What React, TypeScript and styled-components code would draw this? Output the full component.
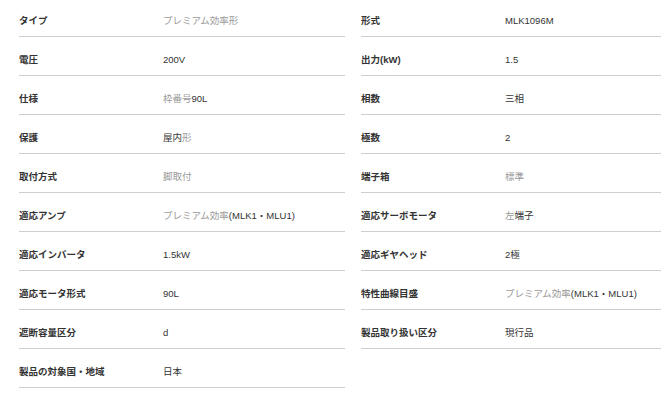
import React from "react";
import styled, { createGlobalStyle } from "styled-components";

const GlobalStyle = createGlobalStyle`
  html, body {
    margin: 0;
    padding: 0;
    background: #fff;
    overflow: hidden;
  }
  body {
    font-family: "Liberation Sans", "Noto Sans CJK JP", sans-serif;
  }
`;

const Page = styled.div`
  display: grid;
  grid-template-columns: 326px 1fr;
  column-gap: 16px;
  align-items: start;
  padding-left: 19px;
  margin-top: -2px;
  width: 642px;
`;

const Column = styled.dl`
  display: flex;
  flex-direction: column;
  margin: 0;
  min-width: 0;
`;

const Row = styled.div`
  display: grid;
  grid-template-columns: 144px 1fr;
  align-items: center;
  padding: 16px 0 8px;
  border-bottom: 1px solid #cfcfcf;
  font-size: 9.5px;
  line-height: 14px;
`;

const Label = styled.dt`
  margin: 0;
  font-weight: bold;
  color: #333;
  white-space: nowrap;
`;

const Value = styled.dd`
  margin: 0;
  color: #333;
  white-space: nowrap;
`;

const Muted = styled.span`
  color: #9a9a9a;
`;

type Part = string | { m: string };
type Spec = { label: string; value: Part[] };

const left: Spec[] = [
  { label: "タイプ", value: [{ m: "プレミアム効率形" }] },
  { label: "電圧", value: ["200V"] },
  { label: "仕様", value: [{ m: "枠番号" }, "90L"] },
  { label: "保護", value: ["屋内", { m: "形" }] },
  { label: "取付方式", value: [{ m: "脚取付" }] },
  { label: "適応アンプ", value: [{ m: "プレミアム効率" }, "(MLK1・MLU1)"] },
  { label: "適応インバータ", value: ["1.5kW"] },
  { label: "適応モータ形式", value: ["90L"] },
  { label: "遮断容量区分", value: ["d"] },
  { label: "製品の対象国・地域", value: ["日本"] },
];

const right: Spec[] = [
  { label: "形式", value: ["MLK1096M"] },
  { label: "出力(kW)", value: ["1.5"] },
  { label: "相数", value: ["三相"] },
  { label: "極数", value: ["2"] },
  { label: "端子箱", value: [{ m: "標準" }] },
  { label: "適応サーボモータ", value: [{ m: "左" }, "端子"] },
  { label: "適応ギヤヘッド", value: ["2極"] },
  { label: "特性曲線目盛", value: [{ m: "プレミアム効率" }, "(MLK1・MLU1)"] },
  { label: "製品取り扱い区分", value: ["現行品"] },
];

const SpecList: React.FC<{ items: Spec[] }> = ({ items }) => (
  <Column>
    {items.map((item) => (
      <Row key={item.label}>
        <Label>{item.label}</Label>
        <Value>
          {item.value.map((p, i) =>
            typeof p === "string" ? (
              <React.Fragment key={i}>{p}</React.Fragment>
            ) : (
              <Muted key={i}>{p.m}</Muted>
            )
          )}
        </Value>
      </Row>
    ))}
  </Column>
);

export default function App() {
  return (
    <>
      <GlobalStyle />
      <Page>
        <SpecList items={left} />
        <SpecList items={right} />
      </Page>
    </>
  );
}
